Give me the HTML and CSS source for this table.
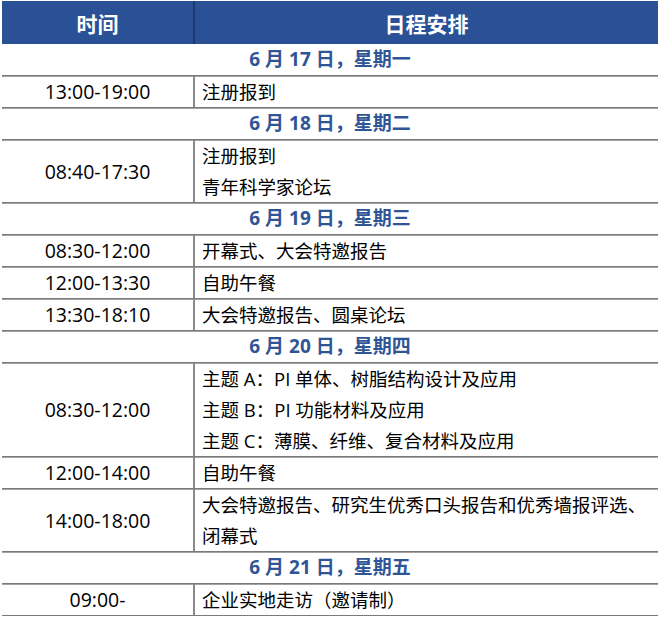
FILE: index.html
```html
<!DOCTYPE html>
<html lang="zh-CN">
<head>
<meta charset="utf-8">
<title>日程安排</title>
<link rel="stylesheet" href="styles.css">
</head>
<body>
<div class="schedule">
  <div class="head">
    <div class="head-cell">时间</div>
    <div class="head-cell head-right">日程安排</div>
  </div>

  <div class="date">6 月 17 日，星期一</div>
  <div class="row"><div class="time">13:00-19:00</div><div class="item"><p>注册报到</p></div></div>

  <div class="date">6 月 18 日，星期二</div>
  <div class="row"><div class="time">08:40-17:30</div><div class="item"><p>注册报到</p><p>青年科学家论坛</p></div></div>

  <div class="date">6 月 19 日，星期三</div>
  <div class="row"><div class="time">08:30-12:00</div><div class="item"><p>开幕式、大会特邀报告</p></div></div>
  <div class="row"><div class="time">12:00-13:30</div><div class="item"><p>自助午餐</p></div></div>
  <div class="row"><div class="time">13:30-18:10</div><div class="item"><p>大会特邀报告、圆桌论坛</p></div></div>

  <div class="date">6 月 20 日，星期四</div>
  <div class="row"><div class="time">08:30-12:00</div><div class="item"><p>主题 A：PI 单体、树脂结构设计及应用</p><p>主题 B：PI 功能材料及应用</p><p>主题 C：薄膜、纤维、复合材料及应用</p></div></div>
  <div class="row"><div class="time">12:00-14:00</div><div class="item"><p>自助午餐</p></div></div>
  <div class="row"><div class="time">14:00-18:00</div><div class="item"><p>大会特邀报告、研究生优秀口头报告和优秀墙报评选、</p><p>闭幕式</p></div></div>

  <div class="date">6 月 21 日，星期五</div>
  <div class="row"><div class="time">09:00-</div><div class="item"><p>企业实地走访（邀请制）</p></div></div>
</div>
</body>
</html>
```

FILE: styles.css
```css
html, body {
  margin: 0;
  padding: 0;
  background: #ffffff;
}

body {
  font-family: "Open Sans", "Noto Sans CJK SC", sans-serif;
  color: #000000;
}

.schedule {
  margin: 0 2px;
  padding-top: 1px;
}

.head {
  display: grid;
  grid-template-columns: 191px 1fr;
  height: 43px;
  background: #2a5096;
  color: #ffffff;
}

.head-cell {
  display: flex;
  align-items: center;
  justify-content: center;
  font-family: "Noto Sans CJK SC", sans-serif;
  font-weight: 700;
  font-size: 21px;
}

.head-right {
  border-left: 2px solid #1d3a70;
}

.date {
  text-align: center;
  font-weight: 700;
  font-size: 19px;
  line-height: 31px;
  color: #2f5597;
  border-bottom: 1px solid #7a7a7a;
  box-shadow: 0 1px 0 #a2a2a2;
}

.row {
  display: grid;
  grid-template-columns: 191px 1fr;
  border-bottom: 1px solid #7a7a7a;
  box-shadow: 0 1px 0 #a2a2a2;
  font-size: 18.5px;
}

.time {
  display: flex;
  align-items: center;
  justify-content: center;
  line-height: 31px;
  font-size: 19.5px;
}

.item {
  border-left: 2px solid #8a8a8a;
  padding-left: 7px;
}

.item p {
  margin: 0;
  line-height: 31px;
  white-space: nowrap;
}
```
